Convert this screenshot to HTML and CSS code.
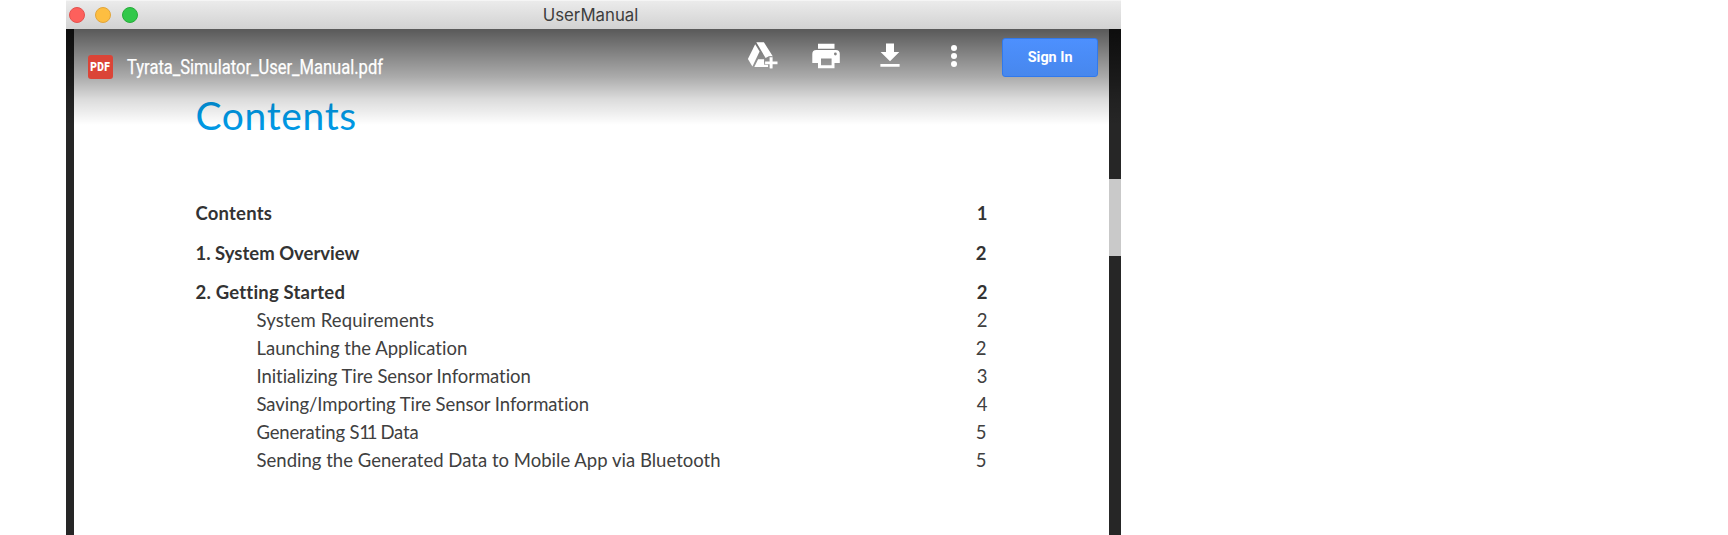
FILE: index.html
```html
<!DOCTYPE html>
<html lang="en">
<head>
<meta charset="utf-8">
<title>UserManual</title>
<link rel="stylesheet" href="styles.css">
</head>
<body>
<main class="window">
  <header class="titlebar">
    <div class="lights"><span class="light red"></span><span class="light yellow"></span><span class="light green"></span></div>
    <span class="title">UserManual</span>
  </header>
  <section class="viewer">
    <div class="gutter"></div>
    <article class="page">
      <h1 class="heading">Contents</h1>
      <ul class="toc">
        <li class="row major"><span class="loose">Contents</span><span>1</span></li>
        <li class="row major"><span>1. System Overview</span><span class="shift">2</span></li>
        <li class="row major"><span class="loose">2. Getting Started</span><span>2</span></li>
        <li class="row minor"><span class="open">System Requirements</span><span>2</span></li>
        <li class="row minor"><span class="even">Launching the Application</span><span class="shift">2</span></li>
        <li class="row minor"><span class="snug">Initializing Tire Sensor Information</span><span>3</span></li>
        <li class="row minor"><span class="snug">Saving/Importing Tire Sensor Information</span><span>4</span></li>
        <li class="row minor"><span class="tight">Generating S<span class="ones">11</span> Data</span><span class="shift">5</span></li>
        <li class="row minor"><span class="even">Sending the Generated Data to Mobile App via Bluetooth</span><span class="shift">5</span></li>
      </ul>
    </article>
    <div class="scrollbar"><div class="thumb"></div></div>
    <div class="toolbar">
      <div class="file"><span class="badge"><span class="badge-text">PDF</span></span><span class="filename">Tyrata_Simulator_User_Manual.pdf</span></div>
      <div class="actions">
        <svg class="icon" viewBox="0 0 32 32" fill="#fff"><path d="M10.3 4.2h7.6l9 14.4h-2v-.2h-2.5L19.6 20z"/><path d="M9.2 6.2l4.4 7.2-7.2 15.2L1.9 21z"/><path d="M12.1 21.2h6v3.2h4v4.5H8.3z"/><path d="M22.7 18.3h4.1v4.5h4.5v4h-4.5v4.3h-4.1v-4.3h-4.5v-4h4.5z" fill="#929292"/><path d="M23.6 19.3h3v4.1h4.9v2.9h-4.9v4.3h-3v-4.3h-4.5v-2.9h4.5z"/></svg>
        <svg class="icon" viewBox="0 0 32 32" fill="#fff"><path fill-rule="evenodd" d="M8 5.7h16.5v5H8zM6.3 12h19.5a4 4 0 0 1 4 4v9h-5.3v5.3H8V25H2.3v-9a4 4 0 0 1 4-4zM11 20.6v6.6h10.6v-6.6zM25.4 14.6a1.4 1.4 0 1 0 0 2.8 1.4 1.4 0 0 0 0-2.8z"/></svg>
        <svg class="icon" viewBox="0 0 32 32" fill="#fff"><path d="M12 5.5h8V14h5.3L16 23.3 6.6 14H12zM6.4 26h19.2v2.8H6.4z"/></svg>
        <svg class="icon" viewBox="0 0 32 32" fill="#fff"><circle cx="16" cy="10" r="3"/><circle cx="16" cy="18" r="3"/><circle cx="16" cy="26" r="3"/></svg>
        <button class="signin"><span class="signin-text">Sign In</span></button>
      </div>
    </div>
  </section>
</main>
</body>
</html>
```
FILE: styles.css
```css
* { box-sizing: border-box; }
body { margin: 0; background: #fff; overflow: hidden; }
.window { margin-left: 66px; width: 1055px; height: 535px; display: flex; flex-direction: column; }
.titlebar { height: 29px; flex: none; display: grid; grid-template-columns: 1fr auto 1fr; align-items: center; background: linear-gradient(#ebebeb, #d2d2d2); border-top: 1px solid #f5f5f5; }
.lights { display: flex; gap: 10.6px; padding-left: 2.5px; }
.light { width: 16px; height: 16px; border-radius: 50%; border: 1px solid; }
.red { background: #fd605c; border-color: #e4514e; }
.yellow { background: #fdbe41; border-color: #e2a53a; }
.green { background: #31c84a; border-color: #27ac3a; }
.title { font: 16.8px/28px Inter, sans-serif; color: #3d3d3d; margin-right: 6px; }
.viewer { position: relative; flex: 1; min-height: 0; display: grid; grid-template-columns: 8px 1fr 12.5px; }
.gutter { background: #262626; }
.scrollbar { background: #262626; padding-top: 150px; }
.thumb { height: 77px; background: #c9c9c9; }
.page { background: #fff; padding: 61px 121px 0 121.5px; overflow: hidden; font-family: Lato, sans-serif; font-variant-ligatures: none; }
.heading { margin: 0; font-size: 39px; line-height: 50px; font-weight: 400; letter-spacing: .65px; color: #0098e4; }
.toc { list-style: none; margin: 59px 0 0; padding: 0; color: #404040; }
.row { display: flex; justify-content: space-between; white-space: nowrap; font-size: 18.5px; line-height: 28px; }
.major { font-weight: 700; margin-top: 11.5px; color: #333; }
.major:first-child { margin-top: 0; }
.minor { padding-left: 61px; }
.loose { letter-spacing: .2px; }
.open { letter-spacing: .13px; }
.even { letter-spacing: .02px; }
.snug { letter-spacing: -.06px; }
.tight { letter-spacing: -.16px; }
.ones { letter-spacing: -3.2px; margin-right: 1.5px; }
.shift { margin-right: 1px; }
.toolbar { position: absolute; inset: 0 0 auto 0; height: 96px; display: flex; justify-content: space-between; align-items: flex-start; background: linear-gradient(rgba(0,0,0,.65), rgba(0,0,0,.33) 50%, rgba(0,0,0,.14) 73%, rgba(0,0,0,0)); }
.file { display: flex; align-items: flex-start; gap: 14px; padding: 26px 0 0 22px; }
.badge { width: 25px; height: 24px; border-radius: 3px; background: #db4437; display: grid; place-items: center; }
.badge-text { font: 900 12.5px/24px Roboto, sans-serif; color: #fff; letter-spacing: .5px; transform: scaleX(.82); }
.filename { font: 19.5px/25px Roboto, sans-serif; color: #fff; -webkit-text-stroke: .25px #fff; transform: scaleX(.848); transform-origin: left; }
.actions { display: flex; padding: 9px 23px 0 0; }
.icon { width: 32px; height: 32px; margin-right: 32px; }
.signin { width: 96px; height: 39px; border: 1px solid #3079ed; border-radius: 3px; background: linear-gradient(#4d90fe, #4787ed); padding: 0; color: #fff; }
.signin-text { font: 700 15.5px/37px Roboto, sans-serif; display: inline-block; transform: scaleX(.93); }
```
